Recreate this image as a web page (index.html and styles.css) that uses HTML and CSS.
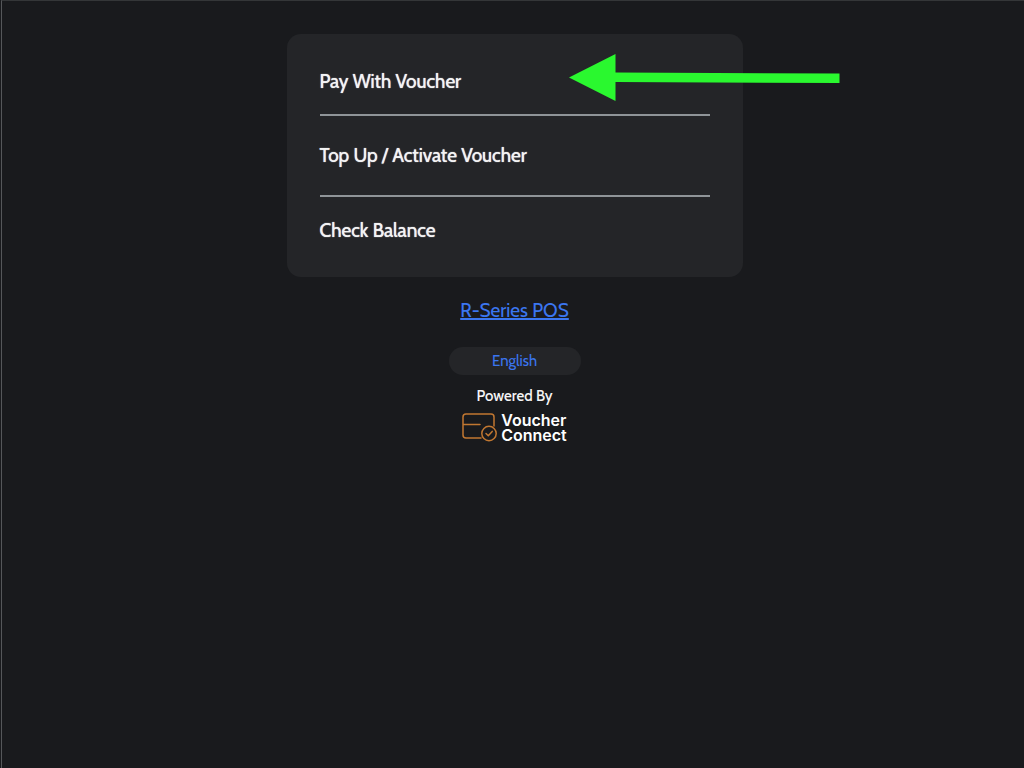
FILE: index.html
```html
<!DOCTYPE html>
<html lang="en">
<head>
<meta charset="utf-8">
<meta name="viewport" content="width=device-width, initial-scale=1">
<title>Voucher Connect</title>
<link rel="stylesheet" href="styles.css">
</head>
<body>
<main class="page">
  <nav class="menu" aria-label="Voucher actions">
    <button class="menu-item" type="button">Pay With Voucher</button>
    <button class="menu-item menu-item-middle" type="button">Top Up / Activate Voucher</button>
    <button class="menu-item" type="button">Check Balance</button>
    <svg class="pointer" viewBox="0 0 272 48" aria-hidden="true">
      <path d="M0 23.5 L46.5 0 V18.5 L270.5 19.5 V29 L46.5 28 V47 Z" fill="#2af82f"/>
    </svg>
  </nav>
  <a class="pos-link" href="#">R-Series POS</a>
  <select class="language" aria-label="Language">
    <option>English</option>
  </select>
  <footer class="powered">
    <p class="powered-label">Powered By</p>
    <div class="brand">
      <svg class="brand-icon" viewBox="0 0 36 30" fill="none" stroke="#c17731" stroke-width="1.5" stroke-linecap="round" stroke-linejoin="round" aria-hidden="true">
        <path d="M19 25 H4 Q1 25 1 22 V4 Q1 1 4 1 H29 Q32 1 32 4 V13 M1 11.5 H18"/>
        <circle cx="27" cy="20.5" r="7.2"/>
        <path d="M24 20.5 L26.3 22.8 L30.2 18.4"/>
      </svg>
      <span class="brand-name">Voucher<br>Connect</span>
    </div>
  </footer>
</main>
</body>
</html>
```
FILE: styles.css
```css
* {
  box-sizing: border-box;
}

body {
  margin: 0 0 0 1px;
  min-height: 100vh;
  border-top: 1px solid #343638;
  border-left: 1px solid #55575a;
  background: #191a1d;
  color: #f4f4f5;
  font-family: Cabin, Lato, sans-serif;
}

.page {
  display: flex;
  flex-direction: column;
  align-items: center;
  padding: 33px 16px 32px 19px;
}

.menu {
  position: relative;
  width: 100%;
  max-width: 456px;
  padding: 14px 33px;
  border-radius: 14px;
  background: #242528;
}

.menu-item {
  display: block;
  width: 100%;
  padding: 22px 0 20px;
  border: 0;
  background: none;
  color: inherit;
  font: 19px/24px Cabin, Lato, sans-serif;
  text-shadow: 0 0 1px currentColor;
  text-align: left;
  cursor: pointer;
}

.menu-item-middle {
  padding: 28px 0 27px;
  border: solid #8f9498;
  border-width: 2px 0;
}

.pointer {
  position: absolute;
  top: 20px;
  left: 282px;
  width: 272px;
  height: 48px;
  pointer-events: none;
}

.pos-link {
  margin-top: 21px;
  color: #3b76f0;
  font-size: 19px;
  line-height: 26px;
  text-decoration-thickness: 2px;
  text-underline-offset: 1px;
  text-decoration-skip-ink: none;
}

.language {
  appearance: none;
  width: 132px;
  height: 28px;
  margin-top: 23px;
  padding: 0;
  border: 0;
  border-radius: 14px;
  background: #242528;
  color: #3b76f0;
  font: 15px/20px Cabin, Lato, sans-serif;
  text-align: center;
  text-align-last: center;
}

.powered {
  display: flex;
  flex-direction: column;
  align-items: center;
  gap: 7px;
  margin-top: 11px;
}

.powered-label {
  margin: 0;
  font-size: 15px;
  font-weight: 500;
  line-height: 20px;
}

.brand {
  display: flex;
  align-items: center;
  gap: 3px;
}

.brand-icon {
  width: 36px;
  height: 30px;
}

.brand-name {
  color: #fff;
  font: 600 16px/15px Inter, sans-serif;
}
```
